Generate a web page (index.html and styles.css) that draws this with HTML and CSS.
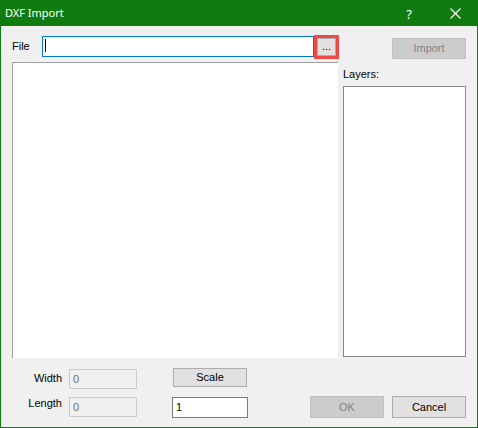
FILE: index.html
```html
<!DOCTYPE html>
<html>
<head>
<meta charset="utf-8">
<title>DXF Import</title>
<link rel="stylesheet" href="styles.css">
</head>
<body>
<div class="window">
  <div class="titlebar">
    <span class="title">DXF Import</span>
    <div class="caption-btn help">?</div>
    <div class="caption-btn close">
      <svg width="11" height="11" viewBox="0 0 11 11"><path d="M0.5 0.5 L10.5 10.5 M10.5 0.5 L0.5 10.5" stroke="#fff" stroke-width="1.1" fill="none"/></svg>
    </div>
  </div>
  <div class="client">
    <div class="top">
      <div class="left">
        <div class="file-row">
          <span class="label file-label">File</span>
          <div class="textbox file-box"><span class="caret"></span></div>
          <div class="btn browse">...</div>
        </div>
        <div class="preview"></div>
      </div>
      <div class="right">
        <div class="btn disabled import">Import</div>
        <div class="label layers-label">Layers:</div>
        <div class="layers"></div>
      </div>
    </div>
    <div class="bottom">
      <div class="label width-label">Width</div>
      <div class="textbox ro width-box">0</div>
      <div class="btn scale-btn">Scale</div>
      <div class="label length-label">Length</div>
      <div class="textbox ro length-box">0</div>
      <div class="textbox scale-box">1</div>
      <div class="btn disabled ok">OK</div>
      <div class="btn cancel">Cancel</div>
    </div>
  </div>
</div>
</body>
</html>
```
FILE: styles.css
```css
* { box-sizing: border-box; }
html, body { margin: 0; padding: 0; background: #f0f0f0; }
.window {
  width: 478px;
  height: 428px;
  background: #f0f0f0;
  border: 1px solid #107c10;
  border-top: none;
  display: flex;
  flex-direction: column;
  font-family: "Liberation Sans", Arial, sans-serif;
  font-size: 11px;
  line-height: 13px;
  color: #000;
}
.titlebar {
  height: 26px;
  margin: 0 -1px;
  background: #107c10;
  display: flex;
  align-items: stretch;
  color: #fff;
  font-family: "Noto Sans", sans-serif;
}
.title {
  font-size: 11px;
  line-height: 26px;
  padding-left: 5px;
  margin-right: auto;
}
.caption-btn {
  width: 46px;
  display: flex;
  align-items: center;
  justify-content: center;
}
.help {
  font-size: 13px;
  line-height: 26px;
  padding-top: 1px;
}
.close svg { display: block; margin-left: 1px; }
.client {
  flex: 1;
  padding: 9px 11px 9px 11px;
  display: flex;
  flex-direction: column;
}
.top {
  display: grid;
  grid-template-columns: 326px 123px;
  column-gap: 5px;
}
.left { display: flex; flex-direction: column; }
.file-row {
  display: flex;
  align-items: flex-start;
  height: 25px;
}
.file-label { width: 30px; margin-top: 5px; }
.textbox {
  background: #fff;
  border: 1px solid #7a7a7a;
  display: flex;
  align-items: center;
  padding-left: 3px;
}
.file-box {
  width: 272px;
  height: 21px;
  margin-top: 1px;
  border-color: #0078d7;
  padding-left: 2px;
  align-items: flex-start;
}
.caret {
  display: block;
  width: 1px;
  height: 13px;
  margin-top: 2px;
  background: #000;
}
.btn {
  background: #e1e1e1;
  border: 1px solid #adadad;
  display: flex;
  align-items: center;
  justify-content: center;
  color: #000;
}
.btn.disabled {
  background: #cccccc;
  border-color: #bfbfbf;
  color: #838383;
}
.browse {
  width: 19px;
  height: 18px;
  margin-left: 3px;
  margin-top: 3px;
  outline: 3px solid #ec4a45;
  padding-bottom: 2px;
}
.preview {
  margin-top: 2px;
  height: 296px;
  background: #fff;
  border-top: 1px solid #a0a0a0;
  border-left: 1px solid #a0a0a0;
}
.right { display: flex; flex-direction: column; }
.import {
  align-self: flex-end;
  width: 74px;
  height: 21px;
  margin-top: 3px;
}
.layers-label { margin-top: 9px; }
.layers {
  flex: 1;
  margin-top: 5px;
  margin-bottom: 1px;
  background: #fff;
  border: 1px solid #828790;
}
.bottom {
  margin-top: 10px;
  display: grid;
  grid-template-columns: 50px 75px 111px 1fr 74px 82px;
  grid-template-rows: 21px 22px;
  row-gap: 7px;
}
.width-label { grid-column: 1; grid-row: 1; text-align: right; padding-top: 4px; }
.length-label { grid-column: 1; grid-row: 2; text-align: right; padding-top: 1px; }
.textbox.ro {
  background: #f0f0f0;
  border-color: #cccccc;
  color: #6d6d6d;
  width: 68px;
  height: 20px;
  justify-self: end;
}
.width-box { grid-column: 2; grid-row: 1; align-self: end; }
.length-box { grid-column: 2; grid-row: 2; align-self: start; margin-top: 1px; }
.scale-btn {
  grid-column: 3; grid-row: 1;
  width: 74px; height: 19px;
  justify-self: end;
  margin-right: 1px;
  align-self: start;
}
.scale-box {
  grid-column: 3; grid-row: 2;
  width: 76px; height: 21px;
  justify-self: end;
  align-self: start;
  margin-top: 1px;
}
.ok { grid-column: 5; grid-row: 2; width: 74px; height: 22px; }
.cancel { grid-column: 6; grid-row: 2; width: 74px; height: 22px; justify-self: end; }
```
